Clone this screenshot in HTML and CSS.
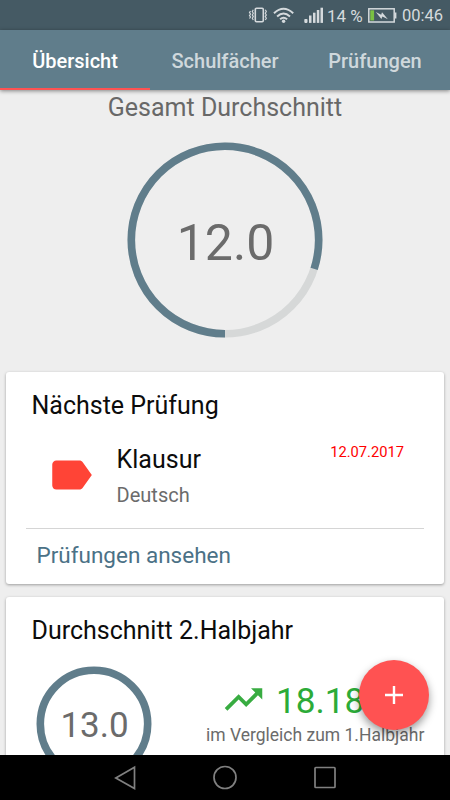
FILE: index.html
```html
<!DOCTYPE html>
<html lang="de">
<head>
<meta charset="utf-8">
<title>Übersicht</title>
<link rel="stylesheet" href="styles.css">
</head>
<body>
<div class="app">
  <header class="status">
    <svg class="status-icons" viewBox="0 0 80 30" width="80" height="30">
      <g fill="none" stroke="#d5dadd" stroke-width="1.600">
        <rect x="8.300" y="8.300" width="8" height="13.400" rx="1.200"/>
        <path d="M6.300 9.800l-1 1.700 1 1.700-1 1.700 1 1.700-1 1.700 1 1.700M3.500 11l-1 1.500 1 1.500-1 1.500 1 1.500-1 1.500M18.300 9.800l1 1.700-1 1.700 1 1.700-1 1.700 1 1.700-1 1.700" stroke-width="1.200"/>
        <path d="M27 13.200Q36.500 4.300 46.200 13.200M30.100 16.400Q36.500 10.600 43 16.400M33.100 19.300Q36.500 16.200 40.100 19.300" stroke-width="2"/>
      </g>
      <g fill="#d5dadd">
        <circle cx="36.600" cy="21.300" r="1.700"/>
        <rect x="57.300" y="19" width="3.200" height="3.900" rx=".8"/>
        <rect x="62" y="15.500" width="2.500" height="7.400"/>
        <rect x="66" y="12.700" width="2.500" height="10.200"/>
        <rect x="69.800" y="10" width="2.500" height="12.900"/>
        <rect x="73.500" y="7.700" width="2.500" height="15.200"/>
      </g>
    </svg>
    <span class="percent">14 %</span>
    <svg class="battery" viewBox="0 0 29 15" width="29" height="15">
      <rect x=".8" y=".8" width="25.400" height="13.200" fill="none" stroke="#d5dadd" stroke-width="1.500"/>
      <path d="M27 4.500h1.400v6H27z" fill="#d5dadd"/>
      <path d="M2.300 2.300h3.800v10.200H2.300z" fill="#7ac142"/>
      <path d="M7.800 4l5.400 2.700.8-2.400 5.900 6.900-5.500-2.600-1 2.400z" fill="#d5dadd"/>
    </svg>
    <span class="clock">00:46</span>
  </header>
  <nav class="tabs">
    <span class="tab active">Übersicht</span>
    <span class="tab">Schulfächer</span>
    <span class="tab">Prüfungen</span>
  </nav>
  <main class="content">
    <section class="overall">
      <h1>Gesamt Durchschnitt</h1>
      <div class="ring big">
        <svg viewBox="0 0 196 196" width="196" height="196" fill="none" stroke-width="7.600">
          <circle cx="98" cy="98" r="93.700" stroke="#d6d8d8"/>
          <circle cx="98" cy="98" r="93.700" stroke="#607d8b" pathLength="100" stroke-dasharray="80 20" transform="rotate(90 98 98)"/>
        </svg>
        <span>12.0</span>
      </div>
    </section>
    <section class="card exam">
      <h2>Nächste Prüfung</h2>
      <div class="exam-row">
        <svg class="label-icon" viewBox="0 0 24 24" width="50" height="50"><path fill="#ff4436" d="M17.630 5.840C17.270 5.330 16.670 5 16 5L5 5.010C3.900 5.010 3 5.900 3 7v10c0 1.100.9 1.990 2 1.990L16 19c.67 0 1.270-.33 1.630-.84L22 12z"/></svg>
        <div class="exam-text">
          <div class="exam-name">Klausur</div>
          <div class="exam-subject">Deutsch</div>
        </div>
        <time>12.07.2017</time>
      </div>
      <a class="action">Prüfungen ansehen</a>
    </section>
    <section class="card half">
      <h2>Durchschnitt 2.Halbjahr</h2>
      <div class="half-row">
        <div class="ring small">
          <svg viewBox="0 0 116 116" width="116" height="116" fill="none"><circle cx="58" cy="58" r="53.700" stroke="#607d8b" stroke-width="7.600"/></svg>
          <span>13.0</span>
        </div>
        <div class="trend">
          <div class="trend-value">
            <svg viewBox="0 0 24 24" width="45" height="45"><path fill="#38ac41" d="M16 6l2.290 2.290-4.880 4.880-4-4L2 16.590 3.410 18l6-6 4 4 6.300-6.290L22 12V6z"/></svg>
            <span>18.18 %</span>
          </div>
          <div class="trend-note">im Vergleich zum 1.Halbjahr</div>
        </div>
      </div>
    </section>
  </main>
  <button class="fab" aria-label="Hinzufügen"><svg viewBox="0 0 18 18" width="18" height="18"><path d="M9 0v18M0 9h18" stroke="#fff" stroke-width="2.400"/></svg></button>
  <footer class="navbar">
    <svg viewBox="0 0 24 26" width="24" height="26"><path d="M21.500 2.300v21.200L2.800 12.900z"/></svg>
    <svg viewBox="0 0 26 26" width="26" height="26"><circle cx="13" cy="12.500" r="11"/></svg>
    <svg viewBox="0 0 24 26" width="24" height="26"><rect x="2" y="2.500" width="20" height="20" rx=".8"/></svg>
  </footer>
</div>
</body>
</html>
```
FILE: styles.css
```css
* { box-sizing: border-box; }
body { margin: 0; font-family: Roboto, "Liberation Sans", sans-serif; }
h1, h2 { margin: 0; font-weight: 400; }
svg { display: block; flex: none; }
span, time, a, h1, h2, .exam-name, .exam-subject, .trend-note { white-space: nowrap; }

.app {
  position: relative;
  display: flex;
  flex-direction: column;
  width: 450px;
  height: 800px;
  overflow: hidden;
  background: #eee;
}

.status {
  display: flex;
  flex: none;
  align-items: center;
  justify-content: flex-end;
  height: 30px;
  padding-right: 8px;
  background: #455a64;
  color: #d5dadd;
  font-size: 17px;
  line-height: 30px;
}
.percent { width: 41px; padding-top: 1px; }
.battery { margin-right: 5px; }
.clock { width: 40px; padding-top: 2px; font-size: 16.500px; }

.tabs {
  z-index: 1;
  display: grid;
  flex: none;
  grid-template-columns: repeat(3, 1fr);
  height: 60px;
  background: #607d8b;
  box-shadow: 0 1px 4px rgba(0, 0, 0, .45);
}
.tab {
  height: 60px;
  border-bottom: 2px solid transparent;
  color: #cfd8dc;
  font-size: 20px;
  font-weight: 500;
  line-height: 62px;
  text-align: center;
}
.tab.active { border-color: #ff5252; color: #fff; }

.content { flex: 1; min-height: 0; overflow: hidden; }
.overall { display: flex; flex-direction: column; align-items: center; height: 282px; }
.overall h1 { color: #686868; font-size: 25px; line-height: 36px; }
.ring { display: grid; place-items: center; }
.ring > * { grid-area: 1 / 1; }
.ring span { color: #6b6b6b; }
.big { margin-top: 16.200px; }
.big span { padding: 5px 0 0 1px; font-size: 50px; }

.card {
  margin: 0 6px 13px;
  border-radius: 3px;
  background: #fff;
  box-shadow: 0 1px 3px rgba(0, 0, 0, .35);
}
.card h2 { padding: 19px 0 0 25.500px; color: #0c0c0c; font-size: 25px; line-height: 30px; }
.exam { height: 212px; }
.exam-row { display: flex; height: 107px; padding: 23px 40px 0; }
.label-icon { margin: 6px 0 0 .3px; }
.exam-text { flex: 1; padding-left: 20.300px; }
.exam-name { color: #0c0c0c; font-size: 25px; line-height: 32px; }
.exam-subject { margin-top: 7px; color: #6b6b6b; font-size: 20px; line-height: 24px; }
.exam-row time { color: #f00; font-size: 14.700px; line-height: 16px; }
.action {
  display: block;
  margin: 0 20px;
  padding: 12px 0 0 10.500px;
  border-top: 1px solid #d5d5d5;
  color: #4b7186;
  font-size: 22.500px;
  line-height: 28px;
}

.half { height: 220px; }
.half-row { display: flex; justify-content: space-between; padding: 19.500px 20px 0 30px; }
.small span { padding: 3px 0 0 1px; font-size: 35px; }
.trend { width: 218px; padding-top: 11px; }
.trend-value { display: flex; height: 45px; margin-left: 15px; color: #2cab38; font-size: 35.200px; line-height: 49px; }
.trend-value span { padding-left: 10px; }
.trend-note { padding-top: 2px; color: #6b6b6b; font-size: 17.500px; line-height: 22px; }

.fab {
  position: absolute;
  z-index: 2;
  top: 660px;
  left: 359px;
  display: grid;
  place-items: center;
  width: 70px;
  height: 70px;
  padding: 0;
  border: 0;
  border-radius: 50%;
  background: #ff5252;
  box-shadow: 0 4px 8px rgba(0, 0, 0, .4);
}

.navbar {
  display: flex;
  flex: none;
  align-items: center;
  justify-content: center;
  gap: 75px;
  height: 45px;
  background: #000;
  fill: none;
  stroke: #808080;
  stroke-width: 1.700;
}
```
